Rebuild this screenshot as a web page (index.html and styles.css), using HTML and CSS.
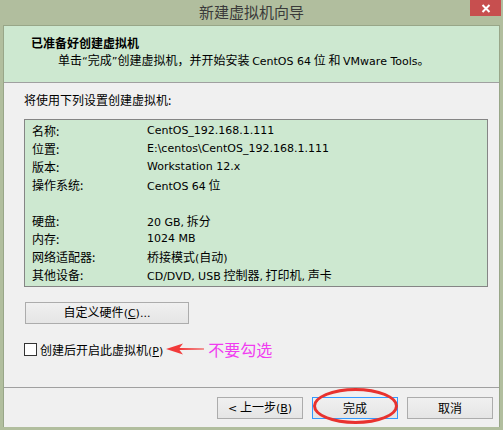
FILE: index.html
```html
<!DOCTYPE html>
<html lang="zh-CN">
<head>
<meta charset="utf-8">
<title>新建虚拟机向导</title>
<link rel="stylesheet" href="styles.css">
</head>
<body>
<div class="window">
  <div class="titlebar">
    <span class="title">新建虚拟机向导</span>
    <div class="close">
      <svg width="10" height="9" viewBox="0 0 10 9"><path d="M1.5 1 L8.5 8 M8.5 1 L1.5 8" stroke="#fff" stroke-width="2" fill="none"/></svg>
    </div>
  </div>
  <div class="client">
    <div class="header">
      <div class="h-title">已准备好创建虚拟机</div>
      <div class="h-sub">单击<span class="en">“</span>完成<span class="en">”</span>创建虚拟机，并开始安装 <span class="en">CentOS 64</span> 位 和 <span class="en">VMware Tools</span>。</div>
    </div>
    <div class="body">
      <div class="intro">将使用下列设置创建虚拟机:</div>
      <div class="summary">
        <div class="row"><span class="lbl">名称:</span><span class="val en">CentOS_192.168.1.111</span></div>
        <div class="row"><span class="lbl">位置:</span><span class="val en">E:\centos\CentOS_192.168.1.111</span></div>
        <div class="row"><span class="lbl">版本:</span><span class="val en">Workstation 12.x</span></div>
        <div class="row"><span class="lbl">操作系统:</span><span class="val"><span class="en">CentOS 64</span> 位</span></div>
        <div class="row"></div>
        <div class="row"><span class="lbl">硬盘:</span><span class="val"><span class="en">20 GB,</span> 拆分</span></div>
        <div class="row"><span class="lbl">内存:</span><span class="val en">1024 MB</span></div>
        <div class="row"><span class="lbl">网络适配器:</span><span class="val">桥接模式<span class="en">(</span>自动<span class="en">)</span></span></div>
        <div class="row"><span class="lbl">其他设备:</span><span class="val"><span class="en">CD/DVD, USB</span> 控制器<span class="en">,</span> 打印机<span class="en">,</span> 声卡</span></div>
      </div>
      <button class="btn btn-custom">自定义硬件<span class="en">(<u>C</u>)...</span></button>
      <div class="check-row">
        <span class="checkbox"></span>
        <span class="check-label">创建后开启此虚拟机<span class="en">(<u>P</u>)</span></span>
        <svg class="arrow" width="38" height="12" viewBox="0 0 38 12"><path d="M0 6 L17 0.5 L13.5 5 L38 5.6 L38 6.4 L13.5 7 L17 11.5 Z" fill="#f23a3a"/></svg>
        <span class="note">不要勾选</span>
      </div>
    </div>
    <div class="footer">
      <button class="btn"><span class="en">&lt;</span> 上一步<span class="en">(<u>B</u>)</span></button>
      <div class="btn-wrap">
        <button class="btn btn-default">完成</button>
        <span class="circle"></span>
      </div>
      <button class="btn">取消</button>
    </div>
  </div>
</div>
</body>
</html>
```

FILE: styles.css
```css
html, body {
  margin: 0;
  padding: 0;
  background: #b1be9e;
}
body {
  font-family: "Noto Sans CJK SC", "DejaVu Sans", sans-serif;
  font-size: 12px;
  color: #000;
}
.en {
  font-family: "DejaVu Sans", sans-serif;
  font-size: 11px;
}
.window {
  width: 503px;
  height: 430px;
  background: #b1be9e;
  display: flex;
  flex-direction: column;
}
.titlebar {
  height: 25px;
  position: relative;
  display: flex;
  align-items: center;
  justify-content: center;
}
.title {
  font-size: 15px;
  color: #3a3a3a;
  line-height: 20px;
  margin-top: -1px;
}
.close {
  position: absolute;
  top: 0;
  right: 2px;
  width: 31px;
  height: 16px;
  background: #c74f4f;
  display: flex;
  align-items: center;
  justify-content: center;
}
.client {
  flex: 1;
  margin: 0 3px 3px 3px;
  border: 1px solid #98a688;
  border-bottom: none;
  background: #f0f0f0;
  display: flex;
  flex-direction: column;
}
.header {
  height: 48px;
  background: #cde8d0;
  border-bottom: 1px solid #a0a0a0;
  padding: 8px 0 0 27px;
  box-sizing: content-box;
}
.h-title {
  font-weight: bold;
  line-height: 17px;
}
.h-sub {
  line-height: 17px;
  margin-left: 27px;
}
.body {
  flex: 1;
  padding: 9px 0 0 20px;
  display: flex;
  flex-direction: column;
  align-items: flex-start;
}
.intro {
  line-height: 16px;
}
.summary {
  margin-top: 11px;
  width: 464px;
  height: 168px;
  box-sizing: border-box;
  border: 1px solid #858585;
  background: #cde8d0;
  padding: 2px 0 0 7px;
}
.row {
  height: 18px;
  line-height: 18px;
  display: flex;
}
.lbl {
  width: 115px;
}
.btn {
  font-family: "Noto Sans CJK SC", "DejaVu Sans", sans-serif;
  font-size: 12px;
  color: #000;
  height: 22px;
  width: 86px;
  box-sizing: border-box;
  border: 1px solid #acacac;
  background: linear-gradient(#f0f0f0, #e5e5e5);
  padding: 0;
  margin: 0;
  line-height: 18px;
}
.btn u {
  text-underline-offset: 1px;
}
.btn-custom {
  margin: 15px 0 0 1px;
  width: 164px;
}
.check-row {
  margin-top: 16px;
  height: 18px;
  display: flex;
  align-items: center;
}
.checkbox {
  width: 13px;
  height: 13px;
  box-sizing: border-box;
  border: 1px solid #333;
  background: #fff;
}
.check-label {
  margin-left: 3px;
}
.arrow {
  margin-left: 3px;
}
.note {
  margin-left: 4px;
  font-size: 16px;
  color: #f03cf0;
  line-height: 18px;
}
.footer {
  height: 30px;
  border-top: 1px solid #a0a0a0;
  display: flex;
  justify-content: flex-end;
  align-items: flex-start;
  gap: 9px;
  padding: 9px 6px 0 0;
  box-sizing: content-box;
}
.btn-wrap {
  position: relative;
  display: flex;
}
.btn-default {
  border-color: #3399ff;
}
.circle {
  position: absolute;
  left: 1px;
  top: -9px;
  width: 85px;
  height: 36px;
  box-sizing: border-box;
  border: 3px solid #e8322f;
  border-radius: 50%;
  pointer-events: none;
}
```
